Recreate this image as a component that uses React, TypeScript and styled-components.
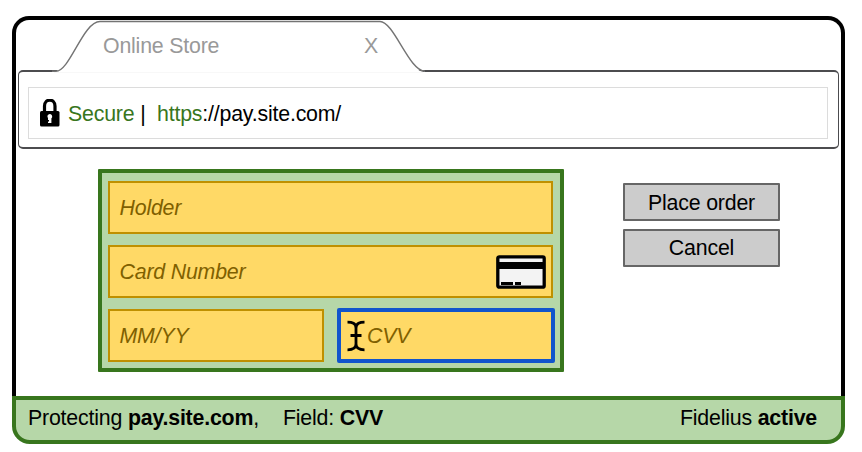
import React from "react";
import styled, { createGlobalStyle, css } from "styled-components";

const GlobalStyle = createGlobalStyle`
  *, *::before, *::after { box-sizing: border-box; }
  body {
    margin: 0;
    background: #fff;
    color: #000;
    font-family: "Liberation Sans", Arial, sans-serif;
    font-size: 21.33px;
    line-height: 24px;
    letter-spacing: -0.19px;
  }
`;

const Page = styled.div`
  width: 862px;
  height: 452px;
  padding: 16px 17px 8px 12px;
  overflow: hidden;
`;

const BrowserWindow = styled.div`
  display: flex;
  flex-direction: column;
  height: 428px;
`;

const Viewport = styled.div`
  flex: 1;
  border: solid #000;
  border-width: 4.5px 4px 0;
  border-radius: 17px 17px 0 0;
`;

const TabStrip = styled.div`
  height: 50px;
  padding-left: 36px;
`;

const Tab = styled.div`
  position: relative;
  z-index: 1;
  display: flex;
  justify-content: space-between;
  width: 373px;
  height: 53px;
  padding: 14px 47px 0 51px;
  color: #999;
`;

const TabOutline = styled.svg`
  position: absolute;
  inset: 0;
  z-index: -1;
`;

const Toolbar = styled.div`
  height: 79px;
  margin: 0 2px;
  padding: 15px 10px 9px 9px;
  border: 2px solid #4c4c4f;
  border-width: 2px 1.5px 2px 1px;
  border-radius: 5px;
`;

const AddressBar = styled.div`
  display: flex;
  align-items: center;
  height: 52px;
  padding: 2px 0 0 10px;
  border: 1px solid #dcdcdc;
  white-space: pre;
`;

const LockIcon = styled.svg`
  margin: -2px 8px 0 0;
`;

const SecureText = styled.span`
  color: #38761d;
`;

const Checkout = styled.div`
  display: flex;
  align-items: flex-start;
  padding: 20px 0 0 82px;
`;

const CardForm = styled.div`
  display: grid;
  grid-template-columns: 216px 216px;
  grid-auto-rows: 53px;
  gap: 11px 13px;
  width: 466px;
  height: 203px;
  padding: 8px 6px;
  border: 4px solid #38761d;
  border-radius: 1px;
  background: #b6d7a8;
`;

const Field = styled.div<{ $wide?: boolean; $focused?: boolean }>`
  display: flex;
  align-items: center;
  justify-content: space-between;
  padding: 1px 5px 0 9.5px;
  border: 2px solid #bf9000;
  background: #ffd966;
  color: #7f6000;
  font-style: italic;
  ${(p) => p.$wide && css`grid-column: 1 / -1;`}
  ${(p) =>
    p.$focused &&
    css`
      justify-content: flex-start;
      gap: 2px;
      margin: -1px -2px -1px 0;
      padding-left: 6px;
      border: 4px solid #1155cc;
      border-radius: 2px;
    `}
`;

const Actions = styled.div`
  display: flex;
  flex-direction: column;
  gap: 7.5px;
  margin: 14px 0 0 59px;
`;

const ActionButton = styled.button`
  width: 157px;
  height: 38px;
  padding: 1px 0 0;
  border: 2px solid #666;
  border-radius: 1px;
  background: #ccc;
  color: #000;
  font: inherit;
  letter-spacing: inherit;
`;

const StatusBar = styled.footer`
  display: flex;
  justify-content: space-between;
  height: 48px;
  padding: 6px 24px 0 12px;
  border: 4px solid #38761d;
  border-radius: 0 0 18px 18px;
  background: #b6d7a8;
  white-space: pre;
`;

const StatusGroup = styled.div`
  display: flex;
  gap: 24px;
`;

export default function App() {
  return (
    <>
      <GlobalStyle />
      <Page>
        <BrowserWindow>
          <Viewport>
            <TabStrip>
              <Tab>
                <TabOutline width="373" height="53" viewBox="0 0 373 53" fill="none">
                  <path d="M2 51.5C17 51.5 30 1.5 48 1.5H328C343 1.5 356 51.5 371 51.5V53H2Z" fill="#fff" />
                  <path d="M2 52.5H371" stroke="#f8f8f8" />
                  <path d="M0 51.2H4C18 51.2 31 1.5 48 1.5H328C342 1.5 357 51.2 373 51.2" stroke="#747474" strokeWidth="1.4" />
                </TabOutline>
                <span>Online Store</span>
                <span>X</span>
              </Tab>
            </TabStrip>
            <Toolbar>
              <AddressBar>
                <LockIcon width="21" height="28" viewBox="0 0 21 28">
                  <path d="M5.5 13V7C5.5 -0.8 16 -0.8 16 7V13" fill="none" stroke="#000" strokeWidth="3.2" />
                  <rect x="1" y="12" width="19.5" height="15.5" rx="1.5" />
                  <path d="M8.4 17.5A2.4 2.4 0 1 1 12.4 19.3V24H9V22.5H10V21H9V19.2Z" fill="#fff" />
                </LockIcon>
                <SecureText>Secure</SecureText>
                {" |  "}
                <SecureText>https</SecureText>
                ://pay.site.com/
              </AddressBar>
            </Toolbar>
            <Checkout>
              <CardForm>
                <Field $wide>Holder</Field>
                <Field $wide>
                  Card Number
                  <svg width="50" height="34" viewBox="0 0 50 34">
                    <rect x="1.8" y="1.8" width="46.4" height="30.4" rx="1.5" fill="#f3f3f3" stroke="#000" strokeWidth="3.3" />
                    <path d="M3 7H47V14H3ZM5 27H17V30H5ZM19 27H25V30H19Z" />
                  </svg>
                </Field>
                <Field>MM/YY</Field>
                <Field $focused>
                  <svg width="18" height="32" viewBox="0 0 18 32">
                    <path d="M0.5 2.2C5 2.2 9 3 9 8V24C9 29 5 29.8 0.5 29.8M17.5 2.2C13 2.2 9 3 9 8V24C9 29 13 29.8 17.5 29.8M3.5 15.5H14.5" fill="none" stroke="#000" strokeWidth="2.8" />
                  </svg>
                  CVV
                </Field>
              </CardForm>
              <Actions>
                <ActionButton>Place order</ActionButton>
                <ActionButton>Cancel</ActionButton>
              </Actions>
            </Checkout>
          </Viewport>
          <StatusBar>
            <StatusGroup>
              <span>Protecting <b>pay.site.com</b>,</span>
              <span>Field: <b>CVV</b></span>
            </StatusGroup>
            <span>Fidelius <b>active</b></span>
          </StatusBar>
        </BrowserWindow>
      </Page>
    </>
  );
}
